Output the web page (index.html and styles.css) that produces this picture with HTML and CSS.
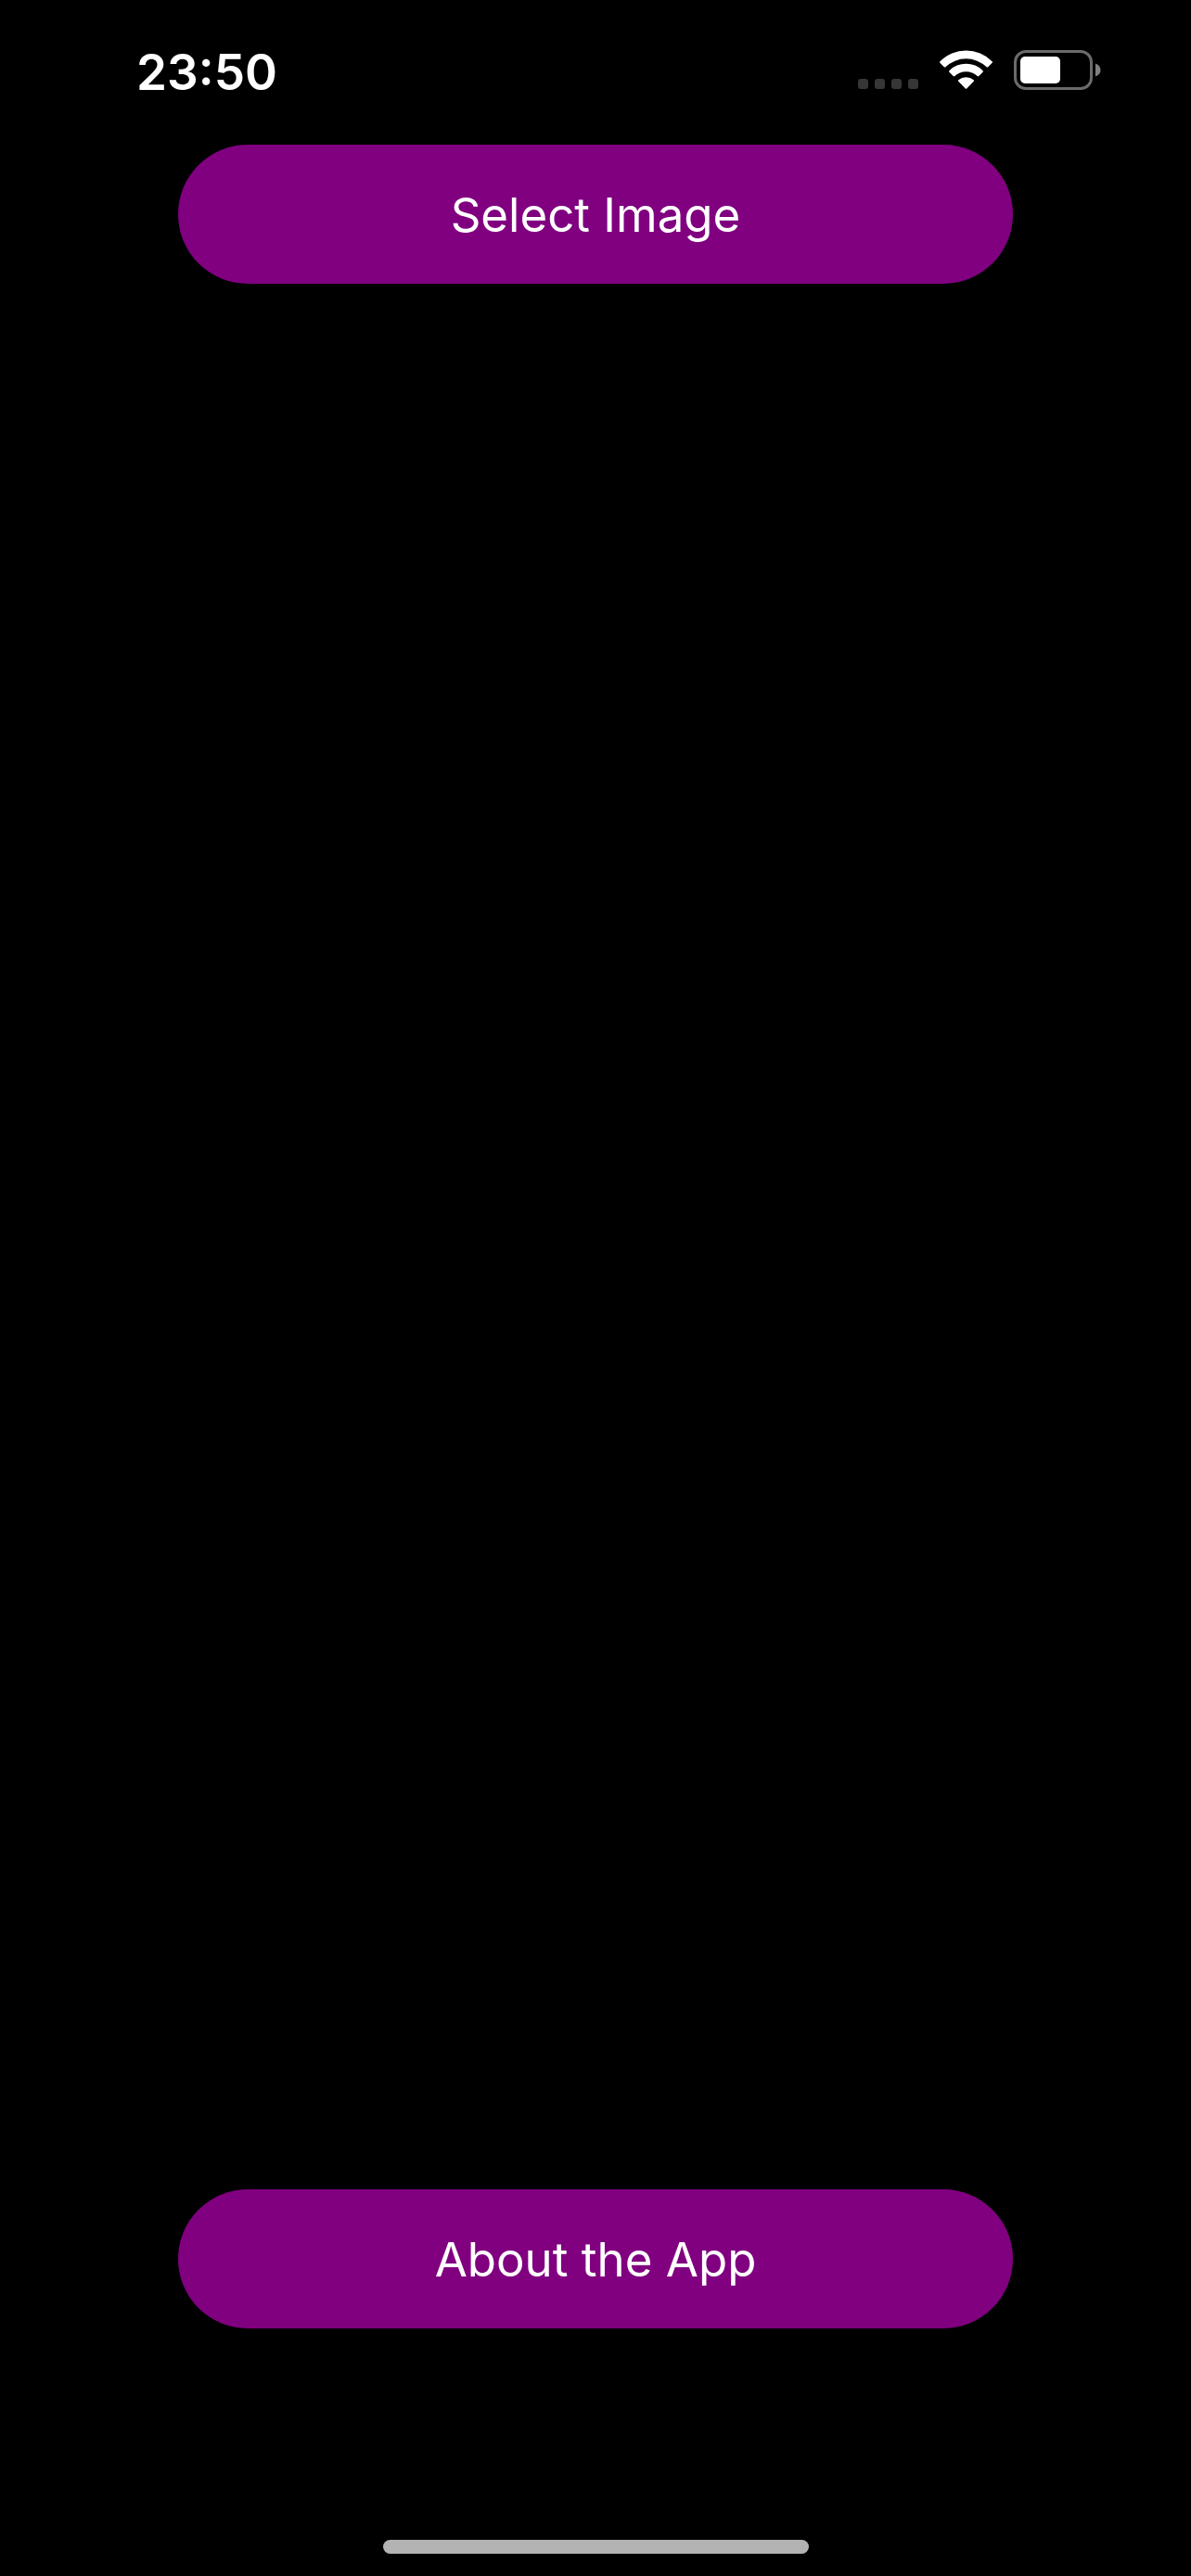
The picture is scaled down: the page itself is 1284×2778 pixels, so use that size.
FILE: index.html
```
<!DOCTYPE html>
<html lang="en">
<head>
<meta charset="utf-8">
<meta name="viewport" content="width=device-width, initial-scale=1">
<title>Select Image</title>
<link rel="stylesheet" href="styles.css">
</head>
<body>
<div class="screen">
  <header class="status-bar">
    <time class="clock">23:50</time>
    <div class="status-icons">
      <svg class="icon" width="65" height="43" viewBox="0 0 65 43" role="img" aria-label="No signal" fill="#363636">
        <rect x="0" y="31" width="11" height="11" rx="3"/>
        <rect x="18" y="31" width="11" height="11" rx="3"/>
        <rect x="36" y="31" width="11" height="11" rx="3"/>
        <rect x="54" y="31" width="11" height="11" rx="3"/>
      </svg>
      <svg class="icon" width="57" height="43" viewBox="0 0 57 43" role="img" aria-label="Wi-Fi" fill="#fff">
        <path d="M.4 12.2A39.5 39.5 0 0 1 56.6 12.2Q57.4 13 56.6 13.8L52.2 18.2Q51.4 19 50.6 18.2A32 32 0 0 0 6.4 18.2Q5.6 19 4.8 18.2L.4 13.8Q-.4 13 .4 12.2Z"/>
        <path d="M10.4 22.2A25.5 25.5 0 0 1 46.6 22.2Q47.4 23 46.6 23.8L42.3 28Q41.5 28.8 40.7 28A18 18 0 0 0 16.3 28Q15.5 28.8 14.7 28L10.4 23.8Q9.6 23 10.4 22.2Z"/>
        <path d="M20.3 32.3A12.5 12.5 0 0 1 36.7 32.3Q37.5 33 36.7 33.8L29.2 41.4Q28.5 42.1 27.8 41.4L20.3 33.8Q19.5 33 20.3 32.3Z"/>
      </svg>
      <svg class="icon" width="94" height="43" viewBox="0 0 94 43" role="img" aria-label="Battery half full">
        <rect x="1.5" y="1.5" width="82" height="40" rx="11.5" fill="none" stroke="#6b6b6b" stroke-width="3"/>
        <rect x="7" y="7" width="43" height="29" rx="5" fill="#fff"/>
        <path d="M88 14.5Q93.500 16.500 93.500 21.500T88 28.500Z" fill="#808080"/>
      </svg>
    </div>
  </header>
  <main class="content">
    <button class="pill" type="button">Select Image</button>
    <button class="pill" type="button">About the App</button>
  </main>
  <footer class="home-area">
    <div class="home-indicator"></div>
  </footer>
</div>
</body>
</html>
```
FILE: styles.css
```
* {
  box-sizing: border-box;
}

body {
  margin: 0;
  background: #000;
  color: #fff;
  font-family: Inter, "Liberation Sans", sans-serif;
}

.screen {
  display: flex;
  flex-direction: column;
  min-height: 100vh;
}

.status-bar {
  display: flex;
  justify-content: space-between;
  align-items: flex-start;
  padding: 54px 97px 54px 147px;
}

.clock {
  font-size: 53px;
  font-weight: 600;
  line-height: 48px;
}

.status-icons {
  display: flex;
  gap: 23px;
}

.icon {
  display: block;
}

.content {
  flex: 1;
  display: flex;
  flex-direction: column;
  justify-content: space-between;
  padding: 0 192px;
}

.pill {
  width: 100%;
  padding: 45px 48px 43px;
  border: 0;
  border-radius: 75px;
  background: #800080;
  color: #fff;
  font-family: inherit;
  font-size: 51px;
  font-weight: 400;
  line-height: 62px;
  cursor: pointer;
}

.home-area {
  display: flex;
  justify-content: center;
  padding: 228px 412px 24px 413px;
}

.home-indicator {
  width: 100%;
  height: 15px;
  border-radius: 8px;
  background: #b3b3b3;
}
```
